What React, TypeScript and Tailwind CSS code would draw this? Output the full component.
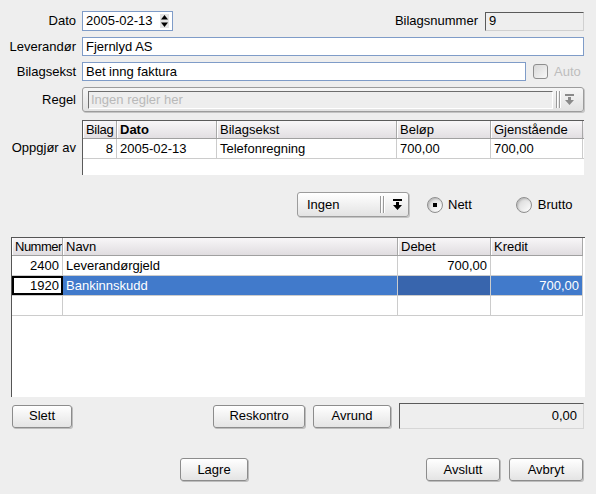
import * as React from 'react';

const DropArrow: React.FC<{ color: string }> = ({ color }) => (
  <svg width="9" height="11" viewBox="0 0 9 11">
    <rect x="0" y="0" width="9" height="2" fill={color} />
    <path d="M3 3h3v3h3l-4.5 5L0 6h3z" fill={color} />
  </svg>
);

const Grip: React.FC = () => (
  <svg width="6" height="17" viewBox="0 0 6 17">
    <rect x="0" y="0" width="1" height="17" fill="#9a9a9a" />
    <rect x="1" y="0" width="1" height="17" fill="#ffffff" />
    <rect x="3" y="0" width="1" height="17" fill="#9a9a9a" />
    <rect x="4" y="0" width="1" height="17" fill="#ffffff" />
  </svg>
);

const Spinner: React.FC = () => (
  <svg width="9" height="14" viewBox="0 0 9 14">
    <rect x="0" y="0" width="9" height="14" fill="#e4e4e4" />
    <path d="M4.5 1L8 5.5H1z" fill="#000" />
    <path d="M1 8.5h7L4.5 13z" fill="#000" />
  </svg>
);

const Btn: React.FC<{ w: string; children: React.ReactNode }> = ({ w, children }) => (
  <div
    className={`${w} h-[23px] flex items-center justify-center rounded-[3px] border border-[#8c8c8c] bg-linear-to-b from-white to-[#e4e4e4] shadow-[1px_1px_0_#bdbdbd]`}
  >
    {children}
  </div>
);

const Radio: React.FC<{ checked?: boolean }> = ({ checked }) => (
  <span className="w-[16px] h-[16px] rounded-full border border-[#8e8e8e] bg-linear-to-br from-[#d4d4d4] to-white shadow-[inset_1px_1px_2px_#b5b5b5] flex items-center justify-center">
    {checked && <span className="w-[4px] h-[4px] bg-black" />}
  </span>
);

const Head: React.FC<{ w: string; bold?: boolean; extra?: string; children?: React.ReactNode }> = ({
  w,
  bold,
  extra = '',
  children,
}) => (
  <div
    className={`${w} h-full pl-[3px] border-r border-[#a8a8a8] shadow-[inset_1px_0_0_#ffffff] whitespace-nowrap overflow-hidden ${
      bold ? 'font-bold' : ''
    } ${extra}`}
  >
    {children}
  </div>
);

const Cell: React.FC<{ w: string; extra?: string; children?: React.ReactNode }> = ({ w, extra = '', children }) => (
  <div className={`${w} h-full px-[3px] border-r border-[#cccccc] whitespace-nowrap ${extra}`}>{children}</div>
);

export default function App() {
  return (
    <div className="w-[596px] h-[494px] bg-[#eeeeee] overflow-hidden text-[13px] text-black font-['Liberation_Sans',Arial,sans-serif]">
      <div className="w-[584px] flex flex-col">
        {/* Dato / Bilagsnummer */}
        <div className="mt-[11px] h-[20px] flex items-center">
          <div className="w-[76px] text-right">Dato</div>
          <div className="ml-[6px] w-[91px] h-[20px] bg-white border border-[#7f9cc8] flex items-center pl-[3px] pr-[3px]">
            <span className="flex-1">2005-02-13</span>
            <Spinner />
          </div>
          <div className="flex-1" />
          <div className="mr-[7px]">Bilagsnummer</div>
          <div className="w-[99px] h-[19px] flex items-center pl-[3px] border border-t-[#5a5a5a] border-l-[#5a5a5a] border-r-[#d0d0d0] border-b-[#d0d0d0]">
            9
          </div>
        </div>

        {/* Leverandør */}
        <div className="mt-[6px] h-[19px] flex items-center">
          <div className="w-[76px] text-right">Leverandør</div>
          <div className="ml-[6px] flex-1 h-[19px] bg-white border border-[#7f9cc8] flex items-center pl-[3px]">
            Fjernlyd AS
          </div>
        </div>

        {/* Bilagsekst */}
        <div className="mt-[6px] h-[19px] flex items-center">
          <div className="w-[76px] text-right">Bilagsekst</div>
          <div className="ml-[6px] w-[444px] h-[19px] bg-white border border-[#7f9cc8] flex items-center pl-[3px]">
            Bet inng faktura
          </div>
          <span className="ml-[7px] w-[15px] h-[15px] rounded-[3px] border border-[#8e8e8e] bg-linear-to-br from-[#d8d8d8] to-[#f8f8f8]" />
          <span className="ml-[6px] text-[#bdbdbd]">Auto</span>
        </div>

        {/* Regel */}
        <div className="mt-[6px] h-[25px] flex items-center">
          <div className="w-[76px] text-right">Regel</div>
          <div className="ml-[6px] flex-1 h-[25px] rounded-[3px] border border-[#9c9c9c] bg-linear-to-b from-[#f6f6f6] to-[#e2e2e2] shadow-[1px_1px_0_#c4c4c4] flex items-center pl-[5px] pr-[9px]">
            <div className="w-[465px] h-[18px] flex items-center pl-[2px] bg-[#eeeeee] border border-t-[#6e6e6e] border-l-[#6e6e6e] border-r-[#ffffff] border-b-[#ffffff] text-[#b9b9b9]">
              Ingen regler her
            </div>
            <div className="ml-[3px]">
              <Grip />
            </div>
            <div className="ml-auto">
              <DropArrow color="#8a8a8a" />
            </div>
          </div>
        </div>

        {/* Oppgjør av */}
        <div className="mt-[8px] flex">
          <div className="w-[76px] text-right pt-[18px] leading-[20px]">Oppgjør av</div>
          <div className="ml-[6px] flex-1 h-[55px] bg-white border-t border-l border-[#5a5a5a] flex flex-col leading-[17px]">
            <div className="h-[18px] flex bg-linear-to-b from-[#f8f6f8] to-[#e2dfe2] border-b border-[#a0a0a0]">
              <Head w="w-[34px]" extra="tracking-[-0.3px] pl-[2px]">
                Bilag
              </Head>
              <Head w="w-[100px]" bold>
                Dato
              </Head>
              <Head w="w-[180px]">Bilagsekst</Head>
              <Head w="w-[94px]">Beløp</Head>
              <Head w="w-[92px]">Gjenstående</Head>
            </div>
            <div className="h-[20px] flex border-b border-[#cccccc] leading-[19px]">
              <Cell w="w-[34px]" extra="text-right">
                8
              </Cell>
              <Cell w="w-[100px]">2005-02-13</Cell>
              <Cell w="w-[180px]">Telefonregning</Cell>
              <Cell w="w-[94px]">700,00</Cell>
              <Cell w="w-[92px]">700,00</Cell>
            </div>
          </div>
        </div>

        {/* Ingen / Nett / Brutto */}
        <div className="mt-[17px] h-[25px] flex items-center">
          <div className="ml-[297px] w-[112px] h-[25px] rounded-[3px] border border-[#9c9c9c] bg-linear-to-b from-white to-[#e3e3e3] shadow-[1px_1px_0_#c4c4c4] flex items-center pl-[9px] pr-[5px]">
            <span className="flex-1">Ingen</span>
            <Grip />
            <div className="ml-[7px] mr-[1px]">
              <DropArrow color="#000" />
            </div>
          </div>
          <div className="ml-[18px]">
            <Radio checked />
          </div>
          <span className="ml-[5px]">Nett</span>
          <div className="ml-[44px]">
            <Radio />
          </div>
          <span className="ml-[6px]">Brutto</span>
        </div>

        {/* Posteringer */}
        <div className="mt-[20px] ml-[11px] w-[574px] h-[160px] bg-white border-t border-l border-[#555555] flex flex-col leading-[17px]">
          <div className="h-[18px] flex">
            <div className="w-[571px] h-[18px] flex bg-linear-to-b from-[#f8f6f8] to-[#e0dde0] border-b border-[#a0a0a0]">
              <Head w="w-[51px]" extra="tracking-[-0.5px] pl-[2px]">
                Nummer
              </Head>
              <Head w="w-[335px]">Navn</Head>
              <Head w="w-[93px]">Debet</Head>
              <Head w="w-[92px]">Kredit</Head>
            </div>
          </div>
          <div className="w-[571px] h-[20px] flex border-b border-[#cccccc] leading-[19px]">
            <Cell w="w-[51px]" extra="text-right">
              2400
            </Cell>
            <Cell w="w-[335px]">Leverandørgjeld</Cell>
            <Cell w="w-[93px]" extra="text-right">
              700,00
            </Cell>
            <Cell w="w-[92px]" />
          </div>
          <div className="w-[571px] h-[20px] flex border-b border-[#cccccc] leading-[19px]">
            <div className="w-[51px] h-full px-[2px] border-2 border-black text-right bg-white leading-[15px]">
              1920
            </div>
            <Cell w="w-[335px]" extra="bg-[#417acb] text-white">
              Bankinnskudd
            </Cell>
            <Cell w="w-[93px]" extra="bg-[#3865ad]" />
            <Cell w="w-[92px]" extra="bg-[#417acb] text-white text-right">
              700,00
            </Cell>
          </div>
          <div className="w-[571px] h-[20px] flex border-b border-[#cccccc]">
            <Cell w="w-[51px]" />
            <Cell w="w-[335px]" />
            <Cell w="w-[93px]" />
            <Cell w="w-[92px]" />
          </div>
        </div>

        {/* Slett / Reskontro / Avrund / sum */}
        <div className="mt-[6px] h-[26px] flex items-center">
          <div className="ml-[12px]">
            <Btn w="w-[60px]">Slett</Btn>
          </div>
          <div className="ml-[141px]">
            <Btn w="w-[92px]">Reskontro</Btn>
          </div>
          <div className="ml-[8px]">
            <Btn w="w-[78px]">Avrund</Btn>
          </div>
          <div className="ml-[8px] w-[185px] h-[26px] flex items-center justify-end pr-[6px] border border-t-[#5a5a5a] border-l-[#5a5a5a] border-r-[#d6d6d6] border-b-[#d6d6d6]">
            0,00
          </div>
        </div>

        {/* Lagre / Avslutt / Avbryt */}
        <div className="mt-[29px] flex items-center">
          <div className="ml-[180px]">
            <Btn w="w-[68px]">Lagre</Btn>
          </div>
          <div className="ml-[178px]">
            <Btn w="w-[74px]">Avslutt</Btn>
          </div>
          <div className="ml-[9px]">
            <Btn w="w-[74px]">Avbryt</Btn>
          </div>
        </div>
      </div>
    </div>
  );
}
